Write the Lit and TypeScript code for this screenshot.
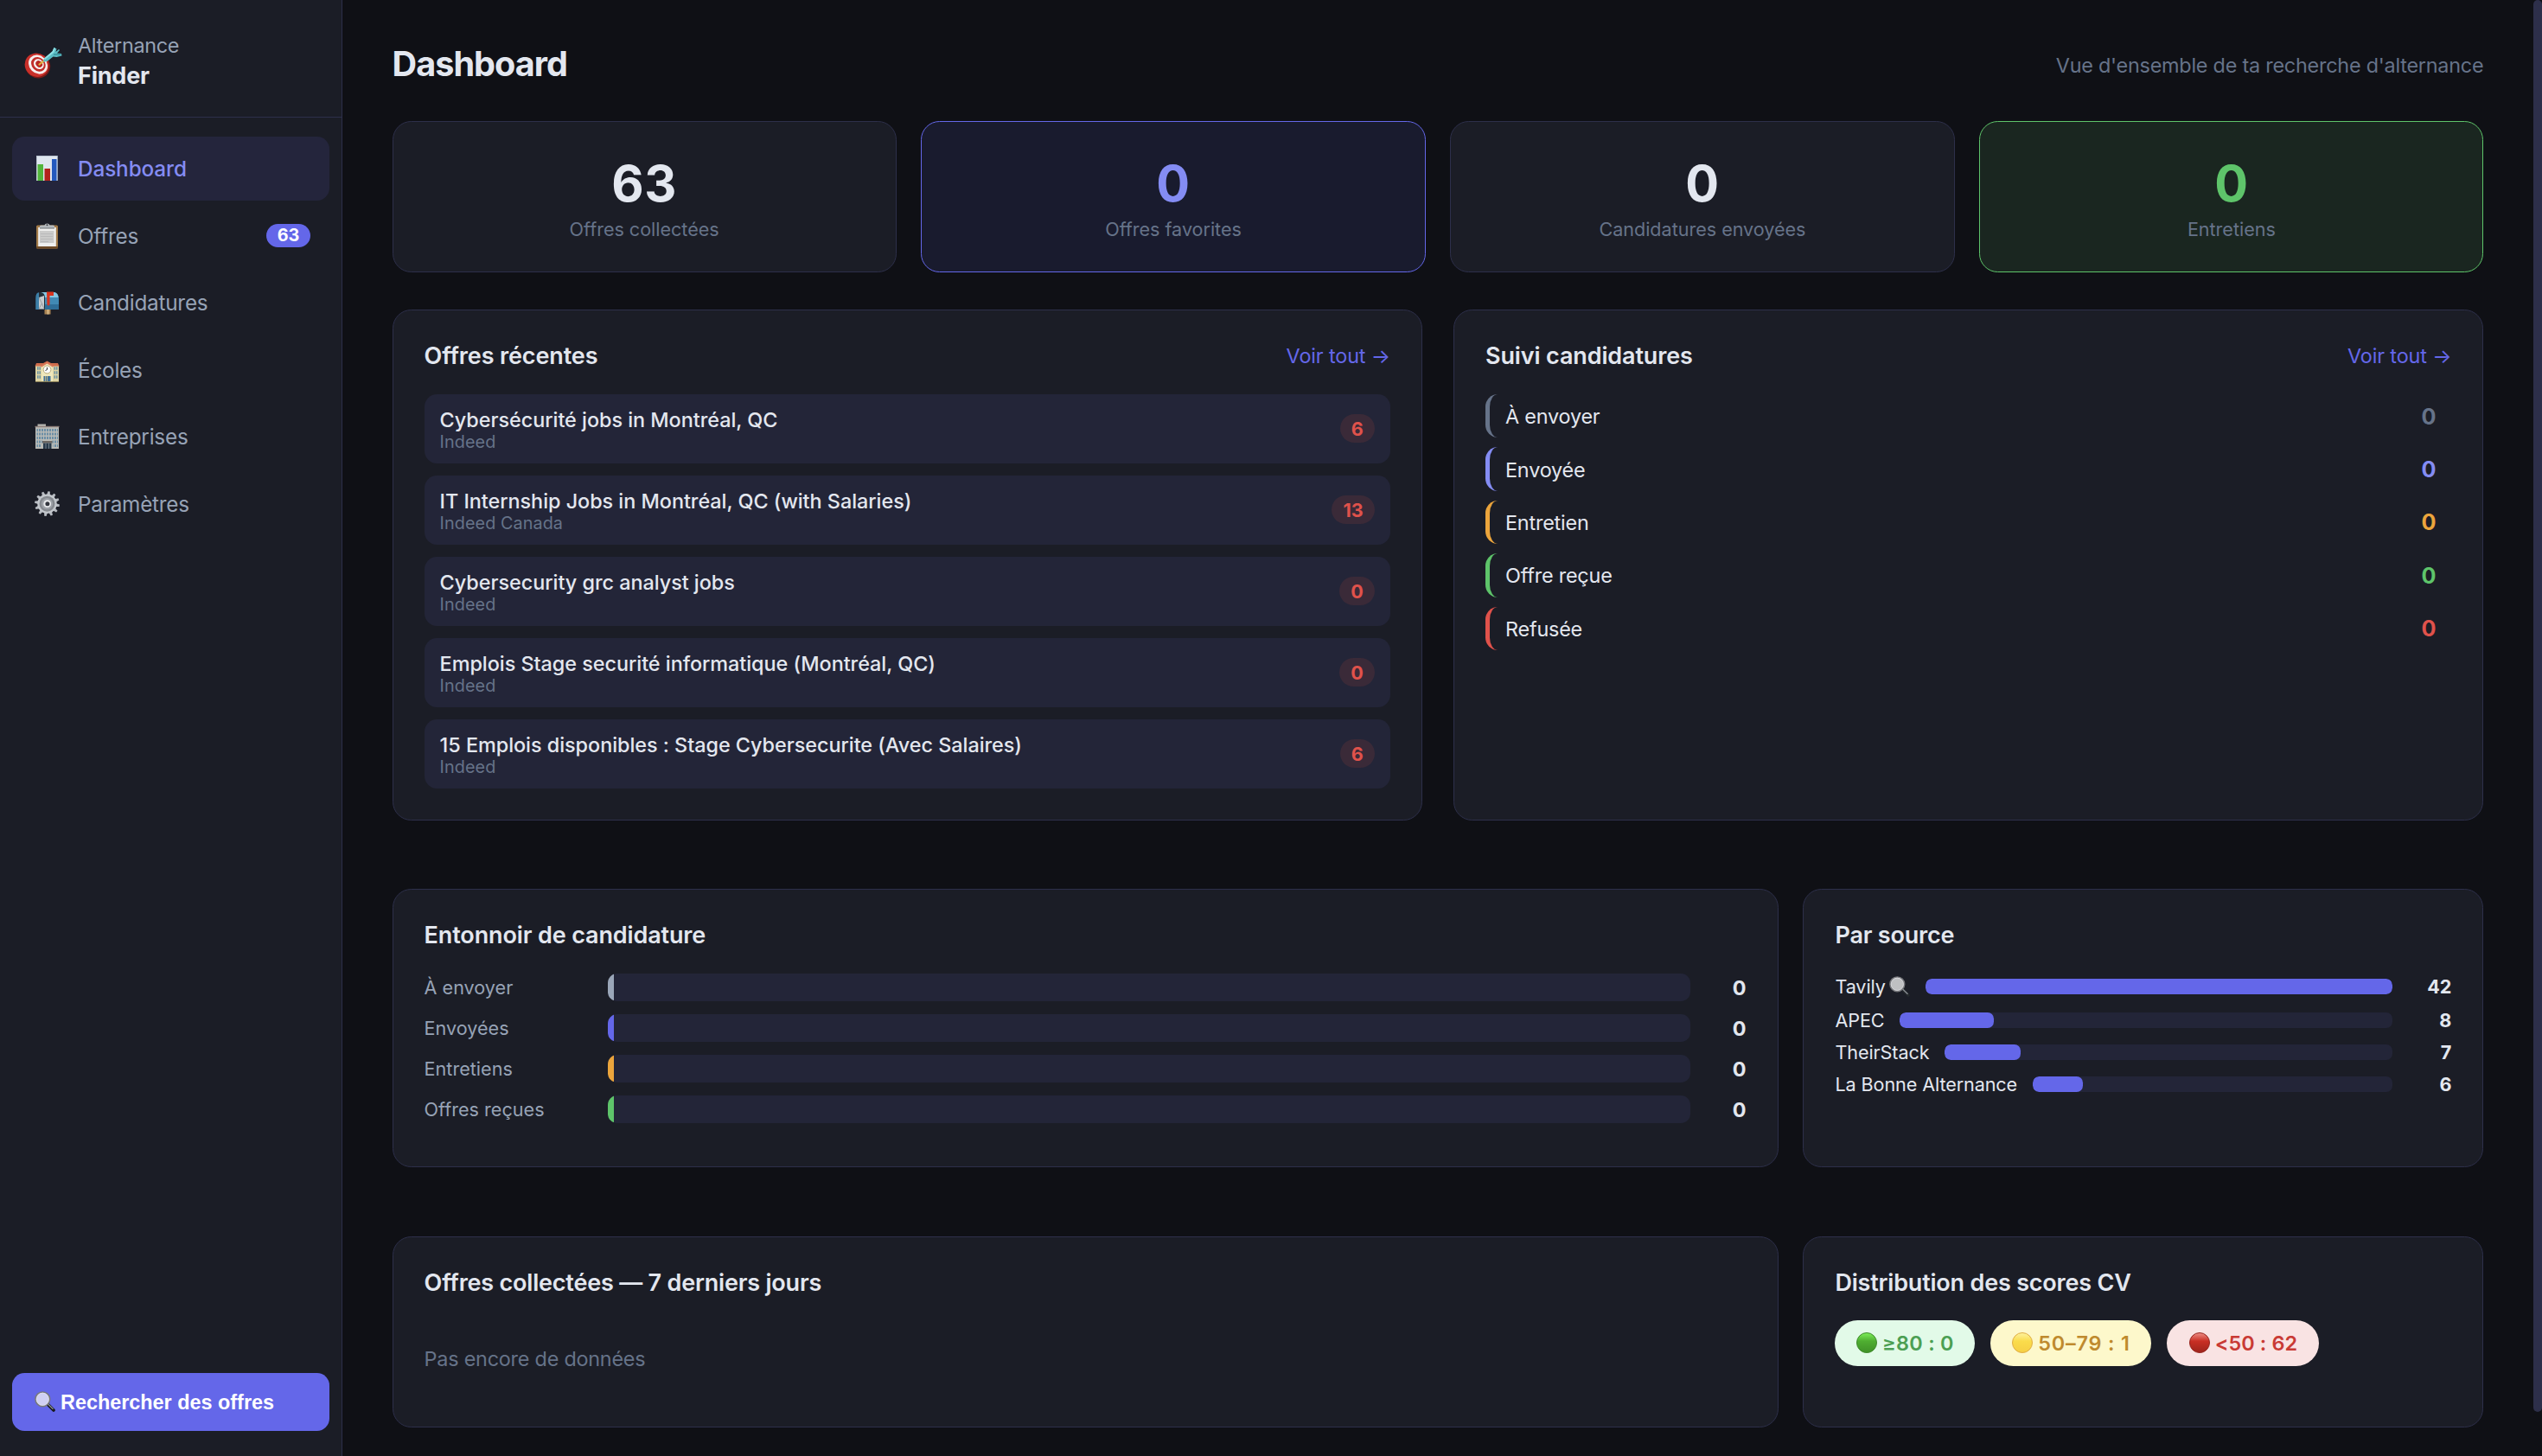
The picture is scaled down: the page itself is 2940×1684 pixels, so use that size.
import { LitElement, html, css, svg, nothing } from "lit";
import { customElement } from "lit/decorators.js";
import { classMap } from "lit/directives/class-map.js";
import { styleMap } from "lit/directives/style-map.js";

const gearTeeth = Array.from({ length: 12 }, (_, i) => i * 30);

const icons: Record<string, unknown> = {
  target: svg`<svg class="ico-logo" viewBox="0 0 46 42">
    <ellipse cx="16.8" cy="24.2" rx="14.6" ry="14" fill="#7d1a17" transform="rotate(35 16.8 24.2)"/>
    <ellipse cx="15.6" cy="23.2" rx="14.2" ry="13.4" fill="#c9302a" transform="rotate(35 15.6 23.2)"/>
    <ellipse cx="17" cy="22.6" rx="11.8" ry="10.2" fill="#f6efee" transform="rotate(45 17 22.6)"/>
    <ellipse cx="17.4" cy="22.4" rx="9" ry="7.6" fill="#c22e29" transform="rotate(45 17.4 22.4)"/>
    <ellipse cx="17.8" cy="22.2" rx="6.4" ry="5.4" fill="#f6efee" transform="rotate(45 17.8 22.2)"/>
    <ellipse cx="18.2" cy="22" rx="4.2" ry="3.4" fill="#b82722" transform="rotate(45 18.2 22)"/>
    <path d="M18.5 22.5 25 17.5" stroke="#e0b23c" stroke-width="2.2" stroke-linecap="round"/>
    <path d="M23 19.5 24 15.5 33.5 7.5 35.5 3 38.5 4.5 37.5 8 41 5 42 6 39 9.5 44 10 44.5 12.5 38.5 14 34.500 13.500 27.500 19Z" fill="#5cbcc4"/>
    <path d="M24 15.500 33.500 7.500 35.500 3 37 4 35.500 8.500 25 17Z" fill="#8fe0e4"/>
    <path d="M35 11 43.500 11" stroke="#2f8790" stroke-width="1.200"/>
  </svg>`,
  chart: svg`<svg class="ico" viewBox="0 0 36 36">
    <rect x="6" y="3" width="25" height="29" fill="#dfe6ef"/>
    <path d="M6 3.500H31M6.500 3V32" stroke="#b9c3cf" stroke-width="1"/>
    <rect x="7.500" y="13" width="6.500" height="19" fill="#52b53c"/>
    <rect x="15.500" y="18" width="6.500" height="14" fill="#b3231b"/>
    <rect x="24" y="7" width="5.500" height="25" fill="#2459bd"/>
    <path d="M30.500 3V32" stroke="#9aa7b8" stroke-width="1"/>
  </svg>`,
  clipboard: svg`<svg class="ico" viewBox="0 0 36 36">
    <rect x="6" y="5.500" width="25" height="27" rx="1.500" fill="#a27a48"/>
    <rect x="6" y="30" width="25" height="2.500" rx="1" fill="#6f4b27"/>
    <rect x="8.200" y="8" width="20.600" height="22" fill="#efefee"/>
    <rect x="10" y="12" width="16.500" height="14" fill="#cbcbca"/>
    <path d="M11 15.500H25M11 18.500H25M11 21.500H25M11 24.500H20" stroke="#bababa" stroke-width="1"/>
    <path d="M10 9V6.500Q10 5.500 12 5.500H15.500Q16 3.500 18.500 3.500T21.500 5.500H25Q27 5.500 27 6.500V9Z" fill="#b4b9bd"/>
    <path d="M10 9H27" stroke="#6d7174" stroke-width="1"/>
    <circle cx="18.500" cy="5.200" r="1" fill="#3a3c42"/>
  </svg>`,
  mailbox: svg`<svg class="ico" viewBox="0 0 36 36">
    <rect x="15.500" y="25" width="7" height="6.500" fill="#a98455"/>
    <rect x="18.500" y="25" width="2" height="6.500" fill="#d9b987"/>
    <path d="M11 6H27Q32 7 32 14V26H11Z" fill="#4189b4"/>
    <path d="M12 6H27Q31 7 31.500 12H12Z" fill="#86c6e2"/>
    <path d="M11 20H32V26H11Z" fill="#2f6d97"/>
    <path d="M5 26V13Q5 6 10.500 6T16 13V26Z" fill="#24303a"/>
    <path d="M5.300 26V13Q5.300 6.600 9 6.300V26Z" fill="#3d7fa8"/>
    <path d="M9 25.500V12L15 10V25.500Z" fill="#c9cccf"/>
    <path d="M9 12 12.500 19 9 25M12.500 19 15 25" stroke="#8b9095" stroke-width=".8" fill="none"/>
    <path d="M18 5.500H26V10H21.500V20.500Q20 22.500 18.500 20.500Z" fill="#d9341f"/>
  </svg>`,
  school: svg`<svg class="ico" viewBox="0 0 36 36">
    <rect x="5" y="12" width="27" height="19.500" fill="#ddd3a2"/>
    <path d="M4.500 13.500 6 10H14L18.500 7.500 23 10H31L32.500 13.500Z" fill="#cf6d4c"/>
    <path d="M12 31.500V13.500L18.500 9.500 25 13.500V31.500Z" fill="#efe7bb"/>
    <path d="M11.500 14 18.500 9.500 25.500 14" stroke="#d9795a" stroke-width="1.600" fill="none"/>
    <circle cx="18.500" cy="17.500" r="4.400" fill="#fff" stroke="#b9a878" stroke-width="1"/>
    <path d="M18.500 17.500V15M18.500 17.500 16.500 18.500" stroke="#333" stroke-width="1"/>
    <path d="M7 16H11M7 21H11M7 26H11M26.500 16H30.500M26.500 21H30.500M26.500 26H30.500" stroke="#6f94a3" stroke-width="3.400"/>
    <path d="M9 14V29M28.500 14V29" stroke="#ddd3a2" stroke-width=".8"/>
    <rect x="14.500" y="25" width="8" height="6.500" fill="#416f96"/>
    <path d="M18.500 25V31.500M16.500 25V31.500" stroke="#c9bd88" stroke-width=".9"/>
    <path d="M5 31.500H32" stroke="#8a7f55" stroke-width="1"/>
  </svg>`,
  building: svg`<svg class="ico" viewBox="0 0 36 36">
    <rect x="7.500" y="3.500" width="9.500" height="3" fill="#b5b4ae"/>
    <rect x="5" y="6" width="27" height="26" fill="#b9bab6"/>
    <path d="M4.500 6.500H32.500" stroke="#8f7f79" stroke-width="1.400"/>
    <path d="M6.500 10.500H31M6.500 15H31M6.500 19.500H31M6.500 24H13M24.500 24H31M6.500 28.500H12M25.500 28.500H31" stroke="#6b8ea6" stroke-width="3"/>
    <path d="M8.500 8V31M11.500 8V31M14.500 8V22M17.500 8V22M20.500 8V22M23.500 8V22M26.500 8V31M29.500 8V31" stroke="#b9bab6" stroke-width="1"/>
    <rect x="13" y="23" width="11.500" height="2.500" fill="#6b6662"/>
    <rect x="14" y="25.500" width="9.500" height="6.500" fill="#27394a"/>
    <path d="M17 25.500V32M20.500 25.500V32" stroke="#7b8791" stroke-width=".9"/>
  </svg>`,
  gear: svg`<svg class="ico" viewBox="0 0 36 36">
    ${gearTeeth.map((a) => svg`<path d="M16.700 7.500 17.400 3.300H19.800L20.500 7.500Z" fill="#b7bbc1" transform="rotate(${a + 8} 18.500 17.700)"/>`)}
    <circle cx="18.500" cy="17.700" r="11.200" fill="#c3c7cc"/>
    <circle cx="18.500" cy="17.700" r="9" fill="#85898f"/>
    <circle cx="18.500" cy="17.700" r="6.600" fill="#9da1a7"/>
    <circle cx="18.700" cy="17.700" r="4.400" fill="#e9ebed"/>
    <circle cx="18.900" cy="17.700" r="2.500" fill="#33363e"/>
  </svg>`,
};

const lens = (cls: string, glass: string, grip: string) => svg`<svg class=${cls} viewBox="0 0 24 24">
    <path d="M15.500 15.500 22 22" stroke=${grip} stroke-width="3.600" stroke-linecap="round"/>
    <path d="M14.800 14.200 21.500 20.700" stroke="#8c9095" stroke-width="1.300"/>
    <circle cx="9.300" cy="9.300" r="8.300" fill=${glass} stroke="#77787c" stroke-width="1.700"/>
    <circle cx="9.300" cy="9.300" r="7.200" fill="none" stroke="#e9e9ee" stroke-width=".6"/>
  </svg>`;

const ball = (id: string, top: string, mid: string, low: string, rim: string) => svg`<svg class="ball" viewBox="0 0 24 24">
    <defs><linearGradient id=${id} x1="0" y1="0" x2="0" y2="1">
      <stop offset="0" stop-color=${top}/><stop offset=".42" stop-color=${mid}/><stop offset="1" stop-color=${low}/>
    </linearGradient></defs>
    <circle cx="12" cy="12" r="11.500" fill="url(#${id})" stroke=${rim} stroke-width="1"/>
  </svg>`;

const navItems = [
  { icon: "chart", label: "Dashboard", active: true },
  { icon: "clipboard", label: "Offres", badge: "63" },
  { icon: "mailbox", label: "Candidatures" },
  { icon: "school", label: "Écoles" },
  { icon: "building", label: "Entreprises" },
  { icon: "gear", label: "Paramètres" },
] as { icon: string; label: string; active?: boolean; badge?: string }[];

const stats = [
  { value: "63", label: "Offres collectées", tone: "" },
  { value: "0", label: "Offres favorites", tone: "accent" },
  { value: "0", label: "Candidatures envoyées", tone: "" },
  { value: "0", label: "Entretiens", tone: "success" },
];

const offers = [
  ["Cybersécurité jobs in Montréal, QC", "Indeed", "6"],
  ["IT Internship Jobs in Montréal, QC (with Salaries)", "Indeed Canada", "13"],
  ["Cybersecurity grc analyst jobs", "Indeed", "0"],
  ["Emplois Stage securité informatique (Montréal, QC)", "Indeed", "0"],
  ["15 Emplois disponibles : Stage Cybersecurite (Avec Salaires)", "Indeed", "6"],
];

const pipeline = [
  ["À envoyer", "slate"],
  ["Envoyée", "indigo"],
  ["Entretien", "amber"],
  ["Offre reçue", "green"],
  ["Refusée", "red"],
];

const funnel = [
  ["À envoyer", "silver"],
  ["Envoyées", "primary"],
  ["Entretiens", "amber"],
  ["Offres reçues", "green"],
];

const sources = [
  { label: "Tavily", lens: true, count: 42 },
  { label: "APEC", count: 8 },
  { label: "TheirStack", count: 7 },
  { label: "La Bonne Alternance", count: 6 },
] as { label: string; lens?: boolean; count: number }[];
const topSource = 42;

@customElement("app-root")
export class AppRoot extends LitElement {
  static styles = css`
    :host {
      --bg: #0f1015;
      --surface: #1b1d26;
      --raised: #232538;
      --line: #2d2f4a;
      --text: #e3e7ef;
      --soft: #97a3b6;
      --muted: #667389;
      --primary: #6467e9;
      --indigo: #848cf3;
      --green: #5ec46a;
      --amber: #eca53c;
      --red: #e0524b;
      display: flex;
      width: 100%;
      height: 1684px;
      overflow: hidden;
      background: var(--bg);
      color: var(--text);
      font-family: Inter, "Liberation Sans", sans-serif;
      font-size: 23.4px;
    }
    * { box-sizing: border-box; }
    svg { display: block; flex: none; }

    .sidebar {
      width: 396px;
      flex: none;
      display: flex;
      flex-direction: column;
      background: var(--surface);
      border-right: 1px solid var(--line);
    }
    .brand {
      height: 136px;
      flex: none;
      display: flex;
      gap: 17px;
      padding: 36px 0 0 27px;
      border-bottom: 1px solid var(--line);
    }
    .ico-logo { width: 46px; height: 42px; margin-top: 16px; }
    .brand-text { line-height: 34.750px; }
    .brand-top { color: var(--soft); letter-spacing: -0.300px; }
    .brand-name { font-size: 27px; font-weight: 700; letter-spacing: -0.2px; }
    .nav {
      flex: 1;
      display: flex;
      flex-direction: column;
      gap: 3.600px;
      padding: 22px 14.400px 0 14px;
    }
    .nav-item {
      height: 74px;
      display: flex;
      align-items: center;
      gap: 18px;
      padding: 0 21.600px 0 22px;
      border-radius: 14.400px;
      color: var(--soft);
      font-size: 24.300px;
      letter-spacing: -0.220px;
    }
    .nav-item.active {
      background: #24253c;
      color: var(--indigo);
      font-weight: 500;
      letter-spacing: -0.100px;
    }
    .ico { width: 36px; height: 36px; }
    .nav-badge {
      margin-left: auto;
      width: 51px;
      line-height: 27px;
      border-radius: 18px;
      background: var(--primary);
      color: #fff;
      font-size: 19.800px;
      font-weight: 700;
      letter-spacing: 0;
      text-align: center;
    }
    .search {
      height: 67px;
      flex: none;
      display: flex;
      align-items: center;
      gap: 6px;
      margin: 0 14.400px 29px 14px;
      padding: 1px 26px 0;
      border: 0;
      border-radius: 14.400px;
      background: var(--primary);
      color: #fff;
      font: 700 23.400px "Liberation Sans", Arial, sans-serif;
    }
    .lens-lg { width: 24px; height: 24px; margin-top: -3px; }

    .main {
      flex: 1;
      min-width: 0;
      padding: 50px 57.600px 0;
    }
    .page-head {
      height: 47px;
      display: flex;
      align-items: center;
      justify-content: space-between;
      margin-bottom: 43px;
    }
    h1 { margin: 0; font-size: 39.600px; font-weight: 700; letter-spacing: -0.970px; }
    .subtitle { padding-top: 3px; color: var(--muted); letter-spacing: -0.230px; }

    .stats {
      display: grid;
      grid-template-columns: repeat(4, 1fr);
      gap: 28.800px;
      margin-bottom: 43px;
    }
    .stat {
      height: 175px;
      padding-top: 36px;
      border: 1px solid var(--line);
      border-radius: 21.600px;
      background: var(--surface);
      text-align: center;
    }
    .stat-value { font-size: 57.600px; line-height: 71px; font-weight: 700; letter-spacing: 0.500px; }
    .stat-label { color: var(--muted); font-size: 21.600px; line-height: 35px; letter-spacing: -0.030px; }
    .stat.accent { background: #191b2e; border-color: var(--primary); }
    .stat.accent .stat-value { color: var(--indigo); }
    .stat.success { background: #1a2620; border-color: var(--green); }
    .stat.success .stat-value { color: var(--green); }

    .card {
      padding: 36px;
      border: 1px solid var(--line);
      border-radius: 21.600px;
      background: var(--surface);
    }
    .halves { display: grid; grid-template-columns: 1fr 1fr; gap: 36px; height: 591px; }
    .wide { display: grid; grid-template-columns: minmax(0, 1fr) 787px; gap: 28.800px; }
    .funnel-row { height: 322px; margin-top: 79px; }
    .bottom-row { height: 221px; margin-top: 80px; }
    .card-head {
      display: flex;
      align-items: center;
      justify-content: space-between;
      height: 32px;
      margin-bottom: 29px;
    }
    .bottom-row .card-head { margin-bottom: 28px; }
    h2 { margin: 0; font-size: 27px; font-weight: 600; letter-spacing: -0.130px; }
    .bottom-row h2, .sources-title { letter-spacing: -0.200px; }
    .more { color: var(--primary); letter-spacing: -0.130px; }

    .offers { display: flex; flex-direction: column; gap: 14.400px; }
    .offer {
      height: 79.600px;
      display: flex;
      align-items: center;
      justify-content: space-between;
      padding: 0 18px;
      border-radius: 14.400px;
      background: var(--raised);
    }
    .offer-text { padding-top: 3px; }
    .offer-title { line-height: 27.600px; font-weight: 500; letter-spacing: -0.030px; }
    .offer-source { line-height: 23px; font-size: 19.800px; color: var(--muted); letter-spacing: 0.080px; }
    .score {
      padding: 1px 13.200px 0;
      line-height: 32px;
      border-radius: 18px;
      background: #3a2a38;
      color: var(--red);
      font-size: 21.600px;
      font-weight: 700;
    }

    .pipeline { display: flex; flex-direction: column; gap: 11px; }
    .stage {
      height: 50.400px;
      display: flex;
      align-items: center;
      justify-content: space-between;
      padding: 1px 18px 0;
      border-left: 5px solid currentColor;
      border-radius: 14.400px;
    }
    .stage-name { color: var(--text); letter-spacing: -0.200px; }
    .stage-count { font-size: 25.200px; font-weight: 700; }
    .stage.slate { color: var(--muted); }
    .stage.indigo { color: var(--indigo); }
    .stage.amber { color: var(--amber); }
    .stage.green { color: var(--green); }
    .stage.red { color: var(--red); }

    .funnel { display: flex; flex-direction: column; gap: 14.600px; }
    .step { display: flex; align-items: center; gap: 14.400px; height: 32.400px; }
    .step-name { width: 198px; flex: none; color: var(--soft); font-size: 21.600px; }
    .step-track { flex: 1; height: 32.400px; border-radius: 10.800px; overflow: hidden; background: var(--raised); }
    .step-fill { width: 7.200px; height: 100%; }
    .step-fill.silver { background: #9aa6b8; }
    .step-fill.primary { background: var(--primary); }
    .step-fill.amber { background: var(--amber); }
    .step-fill.green { background: var(--green); }
    .step-count { width: 50.400px; flex: none; text-align: right; font-weight: 700; }

    .sources { display: flex; flex-direction: column; gap: 10.800px; }
    .source { display: flex; align-items: center; gap: 18px; height: 26.200px; font-size: 21.600px; }
    .source.tall { height: 30px; }
    .source-name { display: flex; align-items: center; gap: 4px; white-space: nowrap; letter-spacing: -0.100px; }
    .lens-sm { width: 24px; height: 24px; margin-top: -1px; }
    .source-track { flex: 1; height: 18px; border-radius: 7.200px; overflow: hidden; background: var(--raised); }
    .source-fill { height: 100%; border-radius: 7.200px; background: var(--primary); }
    .source-count { width: 50.400px; flex: none; text-align: right; font-weight: 700; }

    .empty { padding-top: 31px; line-height: 28px; color: var(--muted); letter-spacing: -0.230px; }
    .pills { display: flex; gap: 18px; }
    .pill {
      height: 53px;
      display: flex;
      align-items: center;
      justify-content: center;
      gap: 6px;
      border-radius: 36px;
      font-weight: 600;
      white-space: pre;
    }
    .ball { width: 24px; height: 24px; margin-top: -1px; }
    .pill.high { width: 162px; background: #e2fae8; color: #4c9f53; letter-spacing: 0.300px; }
    .pill.mid { width: 186px; background: #fdf8cb; color: #bf8a2e; letter-spacing: 0.800px; }
    .pill.low { width: 176px; background: #f9e3e3; color: #c93a34; letter-spacing: 0.100px; }

    .scroll { width: 10px; flex: none; }
    .thumb { height: 1633px; border-radius: 5px; background: var(--line); }
  `;

  render() {
    return html`
      <aside class="sidebar">
        <div class="brand">
          ${icons.target}
          <div class="brand-text">
            <div class="brand-top">Alternance</div>
            <div class="brand-name">Finder</div>
          </div>
        </div>
        <nav class="nav">
          ${navItems.map(
            (n) => html`<a class=${classMap({ "nav-item": true, active: !!n.active })}>
              ${icons[n.icon]}<span>${n.label}</span>
              ${n.badge ? html`<span class="nav-badge">${n.badge}</span>` : nothing}
            </a>`
          )}
        </nav>
        <button class="search">${lens("lens-lg", "#d0d0f3", "#17181b")}<span>Rechercher des offres</span></button>
      </aside>

      <main class="main">
        <header class="page-head">
          <h1>Dashboard</h1>
          <span class="subtitle">Vue d'ensemble de ta recherche d'alternance</span>
        </header>

        <section class="stats">
          ${stats.map(
            (s) => html`<div class="stat ${s.tone}">
              <div class="stat-value">${s.value}</div>
              <div class="stat-label">${s.label}</div>
            </div>`
          )}
        </section>

        <section class="halves">
          <div class="card">
            <div class="card-head"><h2>Offres récentes</h2><a class="more">Voir tout →</a></div>
            <div class="offers">
              ${offers.map(
                ([title, source, score]) => html`<div class="offer">
                  <div class="offer-text">
                    <div class="offer-title">${title}</div>
                    <div class="offer-source">${source}</div>
                  </div>
                  <span class="score">${score}</span>
                </div>`
              )}
            </div>
          </div>
          <div class="card">
            <div class="card-head"><h2>Suivi candidatures</h2><a class="more">Voir tout →</a></div>
            <div class="pipeline">
              ${pipeline.map(
                ([name, tone]) => html`<div class="stage ${tone}">
                  <span class="stage-name">${name}</span><span class="stage-count">0</span>
                </div>`
              )}
            </div>
          </div>
        </section>

        <section class="wide funnel-row">
          <div class="card">
            <div class="card-head"><h2>Entonnoir de candidature</h2></div>
            <div class="funnel">
              ${funnel.map(
                ([name, tone]) => html`<div class="step">
                  <span class="step-name">${name}</span>
                  <div class="step-track"><div class="step-fill ${tone}"></div></div>
                  <span class="step-count">0</span>
                </div>`
              )}
            </div>
          </div>
          <div class="card">
            <div class="card-head"><h2 class="sources-title">Par source</h2></div>
            <div class="sources">
              ${sources.map(
                (s) => html`<div class=${classMap({ source: true, tall: !!s.lens })}>
                  <span class="source-name">${s.label}${s.lens ? lens("lens-sm", "#bfc0c2", "#24282c") : nothing}</span>
                  <div class="source-track">
                    <div class="source-fill" style=${styleMap({ width: `${Math.round((s.count / topSource) * 100)}%` })}></div>
                  </div>
                  <span class="source-count">${s.count}</span>
                </div>`
              )}
            </div>
          </div>
        </section>

        <section class="wide bottom-row">
          <div class="card">
            <div class="card-head"><h2>Offres collectées — 7 derniers jours</h2></div>
            <div class="empty">Pas encore de données</div>
          </div>
          <div class="card">
            <div class="card-head"><h2>Distribution des scores CV</h2></div>
            <div class="pills">
              <span class="pill high">${ball("bg", "#7df05a", "#4fae31", "#3f9127", "#3f8a2c")}<span>≥80 : 0</span></span>
              <span class="pill mid">${ball("by", "#fdf3a0", "#fadc4b", "#f6cf45", "#e0ad45")}<span>50–79 : 1</span></span>
              <span class="pill low">${ball("br", "#ee8f86", "#c92f24", "#9d241b", "#96261f")}<span>&lt;50 : 62</span></span>
            </div>
          </div>
        </section>
      </main>
      <div class="scroll"><div class="thumb"></div></div>
    `;
  }
}
